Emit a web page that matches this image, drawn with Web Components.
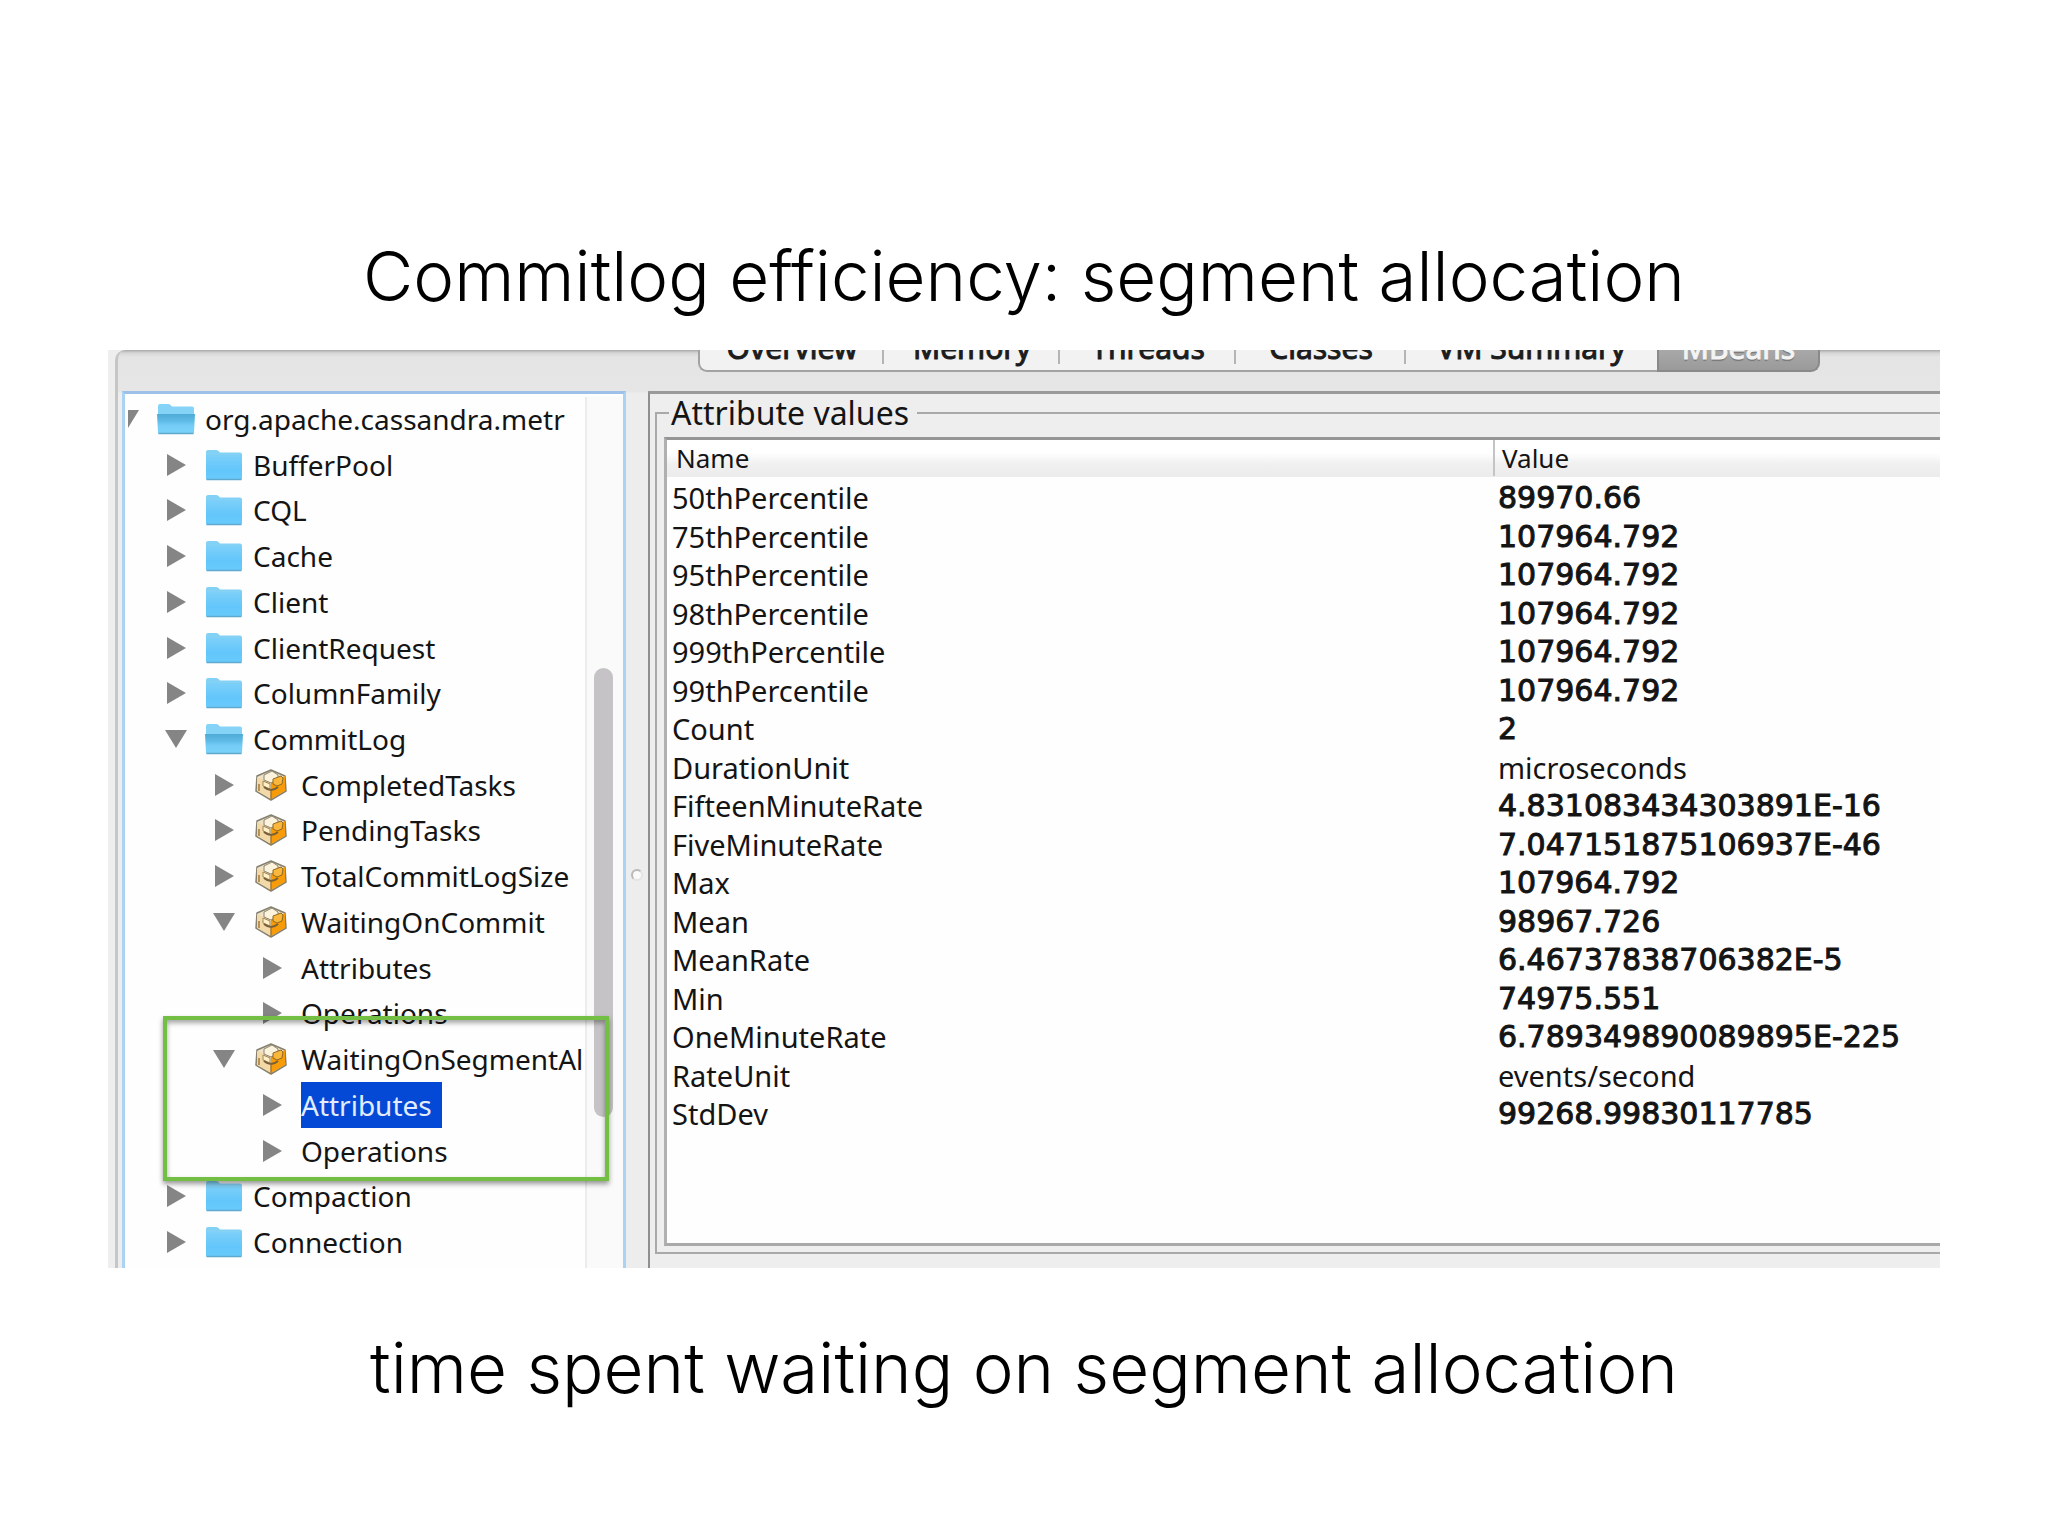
<!DOCTYPE html>
<html lang="en">
<head>
<meta charset="utf-8">
<title>Commitlog efficiency: segment allocation</title>
<style>
  html, body { margin: 0; background: #fff; }
  body { min-height: 100vh; font-family: "Noto Sans", "Open Sans", sans-serif; color: #141414; }
</style>
</head>
<body>
<talk-slide>
  <span slot="title">Commitlog efficiency: segment allocation</span>
  <jconsole-window>
    <tab-strip slot="tabs"></tab-strip>
    <mbean-tree slot="tree">
      <tree-node level="0" icon="folder" open>org.apache.cassandra.metr</tree-node>
      <tree-node level="1" icon="folder">BufferPool</tree-node>
      <tree-node level="1" icon="folder">CQL</tree-node>
      <tree-node level="1" icon="folder">Cache</tree-node>
      <tree-node level="1" icon="folder">Client</tree-node>
      <tree-node level="1" icon="folder">ClientRequest</tree-node>
      <tree-node level="1" icon="folder">ColumnFamily</tree-node>
      <tree-node level="1" icon="folder" open>CommitLog</tree-node>
      <tree-node level="2" icon="bean">CompletedTasks</tree-node>
      <tree-node level="2" icon="bean">PendingTasks</tree-node>
      <tree-node level="2" icon="bean">TotalCommitLogSize</tree-node>
      <tree-node level="2" icon="bean" open>WaitingOnCommit</tree-node>
      <tree-node level="3">Attributes</tree-node>
      <tree-node level="3">Operations</tree-node>
      <tree-node level="2" icon="bean" open>WaitingOnSegmentAl</tree-node>
      <tree-node level="3" selected>Attributes</tree-node>
      <tree-node level="3">Operations</tree-node>
      <tree-node level="1" icon="folder">Compaction</tree-node>
      <tree-node level="1" icon="folder">Connection</tree-node>
    </mbean-tree>
    <attribute-panel slot="detail"></attribute-panel>
  </jconsole-window>
  <span slot="caption">time spent waiting on segment allocation</span>
</talk-slide>

<script>
const define = (name, html, setup) => {
  const template = document.createElement('template');
  template.innerHTML = html;
  customElements.define(name, class extends HTMLElement {
    constructor() {
      super();
      this.attachShadow({ mode: 'open' }).append(template.content.cloneNode(true));
    }
    connectedCallback() { if (setup) setup(this, this.shadowRoot); }
  });
};

define('talk-slide', `
  <style>
    :host { display: flex; flex-direction: column; padding-top: 226px; }
    h1, p { margin: 0; text-align: center; color: #000; font: 300 69px/100px Inter, "Liberation Sans", sans-serif; }
    main { display: block; margin: 24px 108px 50px; }
  </style>
  <h1><slot name="title"></slot></h1>
  <main><slot></slot></main>
  <p><slot name="caption"></slot></p>`);

define('jconsole-window', `
  <style>
    :host { display: block; background: #eee; overflow: hidden; padding-left: 7px; }
    .pane {
      height: 918px; box-sizing: border-box; display: flex; flex-direction: column;
      border-left: 3px solid #c6c6c6; border-top-left-radius: 10px;
      background: linear-gradient(#a9a9a9, #d6d6d6 3px, #e4e4e4 7px, #e6e6e6 42px, #ededed 43px);
    }
    .tabs { height: 41px; padding-left: 580px; }
    .split { flex: 1; display: flex; min-height: 0; padding-left: 4px; }
    .left { flex: none; width: 504px; display: flex; }
    .divider { flex: none; width: 22px; display: flex; align-items: center; justify-content: center; padding-top: 90px; box-sizing: border-box; }
    .divider i { width: 8px; height: 8px; border-radius: 50%; border: 2px solid #b9b9b9; border-right-color: #e4e4e4; border-bottom-color: #e4e4e4; background: #fafafa; }
    .right { flex: 1; min-width: 0; display: flex; }
    .left ::slotted(*), .right ::slotted(*) { flex: 1; min-width: 0; }
  </style>
  <div class="pane">
    <div class="tabs"><slot name="tabs"></slot></div>
    <div class="split">
      <div class="left"><slot name="tree"></slot></div>
      <div class="divider"><i></i></div>
      <div class="right"><slot name="detail"></slot></div>
    </div>
  </div>`);

define('tab-strip', `
  <style>
    :host { display: block; }
    nav { display: grid; width: max-content; grid-template-columns: 186px 176px 176px 170px 251px 163px; margin-top: -24px; }
    button {
      all: unset; box-sizing: border-box; height: 46px; text-align: center;
      font: 30px/42px "Noto Sans", sans-serif; -webkit-text-stroke: 1px currentColor; color: #1c1c1c;
      background: linear-gradient(90deg, #b4b4b4, #b4b4b4) right 0 top 0 / 2px 38px no-repeat, #f2f2f2;
      border-bottom: 2px solid #a2a2a2;
    }
    button:first-child { border-left: 2px solid #a2a2a2; border-bottom-left-radius: 9px; }
    button:nth-child(5) { background: #f2f2f2; }
    button:last-child {
      color: #f4f4f4; background: linear-gradient(#aaa 50%, #9a9a9a);
      border: 2px solid #8a8a8a; border-top: 0; border-bottom-right-radius: 9px; text-shadow: 0 2px 1px #777;
    }
  </style>
  <nav role="tablist">
    <button role="tab">Overview</button><button role="tab">Memory</button><button role="tab">Threads</button><button role="tab">Classes</button><button role="tab">VM Summary</button><button role="tab" aria-selected="true">MBeans</button>
  </nav>`);

define('mbean-tree', `
  <style>
    :host { display: flex; position: relative; box-sizing: border-box; background: #fefefe; border: 3px solid #a9d2f3; border-top-color: #9cc0e8; border-bottom: 0; }
    .nodes { flex: 1; min-width: 0; height: 869px; margin: 2px 0 0 3px; overflow: hidden; display: flex; flex-direction: column; }
    .track { flex: none; width: 38px; margin-top: 3px; box-sizing: border-box; border-left: 2px solid #ececec; background: #fafafa; padding: 271px 0 0 7px; }
    .thumb { width: 19px; height: 449px; border-radius: 10px; background: #c5c3c5; }
    .mark { position: absolute; left: 38px; top: 622px; width: 446px; height: 165px; box-sizing: border-box; border: 4px solid #72bf44; box-shadow: 0 3px 5px rgba(0,0,0,.4), inset 0 3px 5px rgba(0,0,0,.35); }
  </style>
  <div class="nodes" role="tree"><slot></slot></div>
  <div class="track"><div class="thumb"></div></div>
  <div class="mark"></div>`);

const icons = {
  folder: `<svg width="38" height="32" viewBox="0 0 38 32">
    <defs><linearGradient id="f" x1="0" y1="0" x2="0" y2="1"><stop offset="0" stop-color="#7dd0f8"/><stop offset=".6" stop-color="#63c6fb"/><stop offset="1" stop-color="#69cbfc"/></linearGradient></defs>
    <path d="M1 3q0-2 2-2h8q1.500 0 2.500 1l1.500 1.500h20q2 0 2 2V29q0 1.500-1.500 1.500H2.500Q1 30.500 1 29z" fill="#83d2f6"/>
    <path d="M1 6h36v23q0 1.500-1.500 1.500h-33Q1 30.500 1 29z" fill="url(#f)"/>
    <path d="M1.500 30.500h35" stroke="#5fa9cf" stroke-width="1.500"/></svg>`,
  folderOpen: `<svg width="38" height="32" viewBox="0 0 38 32">
    <defs><linearGradient id="o" x1="0" y1="0" x2="0" y2="1"><stop offset="0" stop-color="#4fabd6"/><stop offset=".35" stop-color="#5dbbe6"/><stop offset=".6" stop-color="#74cdf6"/><stop offset="1" stop-color="#7ad2fa"/></linearGradient></defs>
    <path d="M1 3q0-2 2-2h8q1.500 0 2.500 1l1.500 1.500h20q2 0 2 2V29q0 1.500-1.500 1.500H2.500Q1 30.500 1 29z" fill="#85d3f7"/>
    <path d="M0 11h38l-1 18q0 1.500-1.500 1.500h-33Q1 30.500 1 29z" fill="url(#o)"/>
    <path d="M1.500 30.500h35" stroke="#5fa9cf" stroke-width="1.500"/></svg>`,
  bean: `<svg width="32" height="32" viewBox="0 0 32 32">
    <path d="M16 1 30 7 31 22 16 31 1 22 2 7z" fill="#eee3c8" stroke="#85806f" stroke-width="1.500" stroke-linejoin="round"/>
    <path d="M2 8 16 14V30L2 22z" fill="#f3d9a8"/>
    <path d="M16 14 30 7v15L16 30z" fill="#f79b09"/>
    <path d="M9 6 17 2l6 4v4l-7 4-7-3z" fill="#fbf3dc" stroke="#8b8470"/>
    <path d="M18 10l8-3 2 2-1 6-5 2-4-2z" fill="#fbb63c" stroke="#8d6a24"/>
    <path d="M8 12l7 3v5l-7-3z" fill="#fff0c8" stroke="#a08656"/>
    <path d="M9 18q7 6 14 0" fill="none" stroke="#77613a" stroke-width="2"/>
    <path d="M16 22v9M4 15v7" stroke="#a67a33" stroke-width="1.500"/></svg>`
};

define('tree-node', `
  <style>
    :host { flex: 1; min-height: 0; display: flex; align-items: center; }
    .arrow { flex: none; width: 22px; height: 22px; margin: 0 18px 0 -11px; }
    .icon { flex: none; width: 48px; display: flex; }
    .icon:empty { width: 0; }
    .label { font-size: 28px; line-height: 46px; white-space: nowrap; }
    :host([icon="bean"]) .icon { padding-left: 2px; box-sizing: border-box; }
    :host([selected]) .label { background: #0349d5; color: #e3ecff; padding-right: 10px; }
  </style>
  <svg class="arrow" viewBox="0 0 22 22"><path fill="#858585"/></svg>
  <span class="icon"></span>
  <span class="label"><slot></slot></span>`, (host, root) => {
    const level = Number(host.getAttribute('level'));
    const open = host.hasAttribute('open');
    host.setAttribute('role', 'treeitem');
    host.style.paddingLeft = 'calc(' + level + ' * 48px)';
    root.querySelector('path').setAttribute('d', open ? 'M0 2H22L11 20z' : 'M2 0V22L21 11z');
    const icon = host.getAttribute('icon');
    if (icon) root.querySelector('.icon').innerHTML = icons[icon === 'folder' && open ? 'folderOpen' : icon];
  });

const attributes = [
  ['50thPercentile', '89970.66'], ['75thPercentile', '107964.792'], ['95thPercentile', '107964.792'],
  ['98thPercentile', '107964.792'], ['999thPercentile', '107964.792'], ['99thPercentile', '107964.792'],
  ['Count', '2'], ['DurationUnit', 'microseconds'], ['FifteenMinuteRate', '4.831083434303891E-16'],
  ['FiveMinuteRate', '7.047151875106937E-46'], ['Max', '107964.792'], ['Mean', '98967.726'],
  ['MeanRate', '6.46737838706382E-5'], ['Min', '74975.551'], ['OneMinuteRate', '6.789349890089895E-225'],
  ['RateUnit', 'events/second'], ['StdDev', '99268.99830117785']
];

define('attribute-panel', `
  <style>
    :host { display: flex; box-sizing: border-box; border-left: 2px solid #8f8f8f; border-top: 3px solid #9a9a9a; padding: 0 0 14px 5px; background: #eee; }
    fieldset {
      flex: 1; min-width: 0; margin: 0; padding: 5px 0 6px 7px; display: flex; box-sizing: border-box;
      border: 2px solid #a9a9a9; border-right: 0;
    }
    legend { margin-left: 5px; padding: 0 8px 0 2px; font-size: 32px; line-height: 38px; }
    .scroll { flex: 1; min-width: 0; border: 3px solid #959595; border-left-color: #b0b0b0; border-bottom-color: #a9a9a9; border-right: 0; background: #fefefe; }
    table { width: 100%; border-collapse: collapse; table-layout: fixed; }
    col.name { width: 826px; }
    th, td { padding: 0; text-align: left; font-weight: 400; white-space: nowrap; }
    thead tr { background: linear-gradient(#fff 35%, #f0f0f0 65%, #ececec); }
    th { height: 37px; font-size: 26px; line-height: 36px; vertical-align: top; }
    th span { display: block; padding-left: 9px; }
    th + th span { border-left: 2px solid #c4c4c4; padding-left: 7px; }
    tbody { font-size: 29px; }
    tbody::before { content: ""; display: block; height: 2px; }
    td { line-height: 38px; padding-left: 5px; }
    tbody tr:nth-child(even) td { line-height: 39px; }
    td.number { font-family: "DejaVu Sans", sans-serif; font-size: 30px; -webkit-text-stroke: 1px currentColor; }
  </style>
  <fieldset>
    <legend>Attribute values</legend>
    <div class="scroll">
      <table>
        <colgroup><col class="name"><col></colgroup>
        <thead><tr><th scope="col"><span>Name</span></th><th scope="col"><span>Value</span></th></tr></thead>
        <tbody></tbody>
      </table>
    </div>
  </fieldset>`, (host, root) => {
    const body = root.querySelector('tbody');
    for (const [name, value] of attributes) {
      const row = body.insertRow();
      row.insertCell().textContent = name;
      const cell = row.insertCell();
      cell.textContent = value;
      if (/^\d/.test(value)) cell.className = 'number';
    }
  });
</script>
</body>
</html>
